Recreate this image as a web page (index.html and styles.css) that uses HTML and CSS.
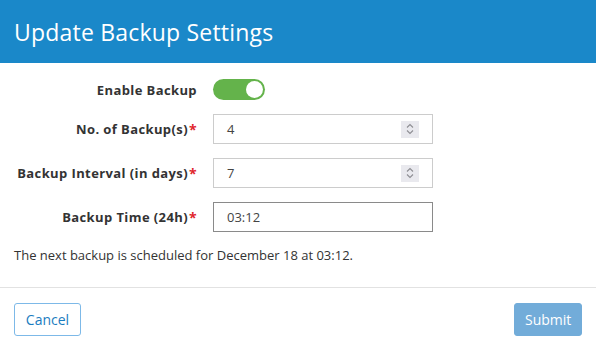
FILE: index.html
```html
<!DOCTYPE html>
<html lang="en">
<head>
    <meta charset="UTF-8">
    <meta name="viewport" content="width=device-width, initial-scale=1.0">
    <title>Update Backup Settings</title>
    <link rel="stylesheet" href="styles.css">
</head>
<body>
    <div class="modal">
        <div class="modal-header">
            <h1>Update Backup Settings</h1>
        </div>

        <div class="modal-body">
            <div class="form-grid">
                <label class="field-label">Enable Backup</label>
                <div class="field">
                    <span class="switch"><span class="knob"></span></span>
                </div>

                <label class="field-label">No. of Backup(s)<span class="req">*</span></label>
                <div class="field">
                    <div class="text-input">
                        <span class="value">4</span>
                        <span class="spinner">
                            <svg width="10" height="14" viewBox="0 0 10 14"><path d="M2 5.5 L5 2.5 L8 5.5 M2 8.5 L5 11.5 L8 8.5" fill="none" stroke="#8e8e93" stroke-width="1.1"/></svg>
                        </span>
                    </div>
                </div>

                <label class="field-label">Backup Interval (in days)<span class="req">*</span></label>
                <div class="field">
                    <div class="text-input">
                        <span class="value">7</span>
                        <span class="spinner">
                            <svg width="10" height="14" viewBox="0 0 10 14"><path d="M2 5.5 L5 2.5 L8 5.5 M2 8.5 L5 11.5 L8 8.5" fill="none" stroke="#8e8e93" stroke-width="1.1"/></svg>
                        </span>
                    </div>
                </div>

                <label class="field-label">Backup Time (24h)<span class="req">*</span></label>
                <div class="field">
                    <div class="text-input dark">
                        <span class="value">03:12</span>
                    </div>
                </div>
            </div>

            <p class="schedule-note">The next backup is scheduled for December 18 at 03:12.</p>
        </div>

        <div class="modal-footer">
            <button class="btn btn-outline">Cancel</button>
            <button class="btn btn-primary">Submit</button>
        </div>
    </div>
</body>
</html>
```

FILE: styles.css
```css
* {
    margin: 0;
    padding: 0;
    box-sizing: border-box;
}

body {
    font-family: "Open Sans", Lato, sans-serif;
    background: #ffffff;
    color: #333333;
}

.modal {
    width: 596px;
    height: 347px;
    background: #ffffff;
}

.modal-header {
    background: #1a88c9;
    height: 63px;
    padding: 0 14px;
    display: flex;
    align-items: center;
}

.modal-header h1 {
    color: #ffffff;
    font-size: 23px;
    font-weight: 400;
    letter-spacing: 0.2px;
    margin-top: 1px;
}

.modal-body {
    padding: 16px 14px 0;
    height: 225px;
    border-bottom: 1px solid #e2e2e2;
}

.form-grid {
    display: grid;
    grid-template-columns: 183px 220px;
    grid-template-rows: 21px 30px 30px 30px;
    column-gap: 16px;
    row-gap: 14px;
}

.field-label {
    font-size: 13px;
    font-weight: 700;
    letter-spacing: 0.4px;
    color: #333333;
    text-align: right;
    display: flex;
    align-items: center;
    justify-content: flex-end;
    white-space: nowrap;
}

.req {
    color: #e0262c;
    margin-left: 1px;
    font-size: 14px;
}

.field {
    display: flex;
    align-items: center;
}

.switch {
    width: 52px;
    height: 21px;
    border-radius: 11px;
    background: #64b34b;
    position: relative;
}

.knob {
    position: absolute;
    right: 2px;
    top: 2px;
    width: 17px;
    height: 17px;
    border-radius: 50%;
    background: #ffffff;
}

.text-input {
    width: 220px;
    height: 30px;
    border: 1px solid #cccccc;
    display: flex;
    align-items: center;
    justify-content: space-between;
    padding: 0 13px 0 13px;
    font-size: 13px;
    color: #444444;
}

.text-input.dark {
    border-color: #8a8a8a;
}

.spinner {
    width: 18px;
    height: 17px;
    background: #e9e9ee;
    display: flex;
    align-items: center;
    justify-content: center;
}

.schedule-note {
    margin-top: 13px;
    font-size: 13px;
    line-height: 20px;
    color: #333333;
}

.modal-footer {
    display: flex;
    justify-content: space-between;
    padding: 15px 14px 0;
}

.btn {
    height: 33px;
    border-radius: 3px;
    font-family: inherit;
    font-size: 14px;
    padding: 0 10px;
}

.btn-outline {
    width: 67px;
    background: #ffffff;
    border: 1px solid #7db9e8;
    color: #1a7cc0;
}

.btn-primary {
    width: 68px;
    background: #72acd9;
    border: 1px solid #72acd9;
    color: #ffffff;
}
```
